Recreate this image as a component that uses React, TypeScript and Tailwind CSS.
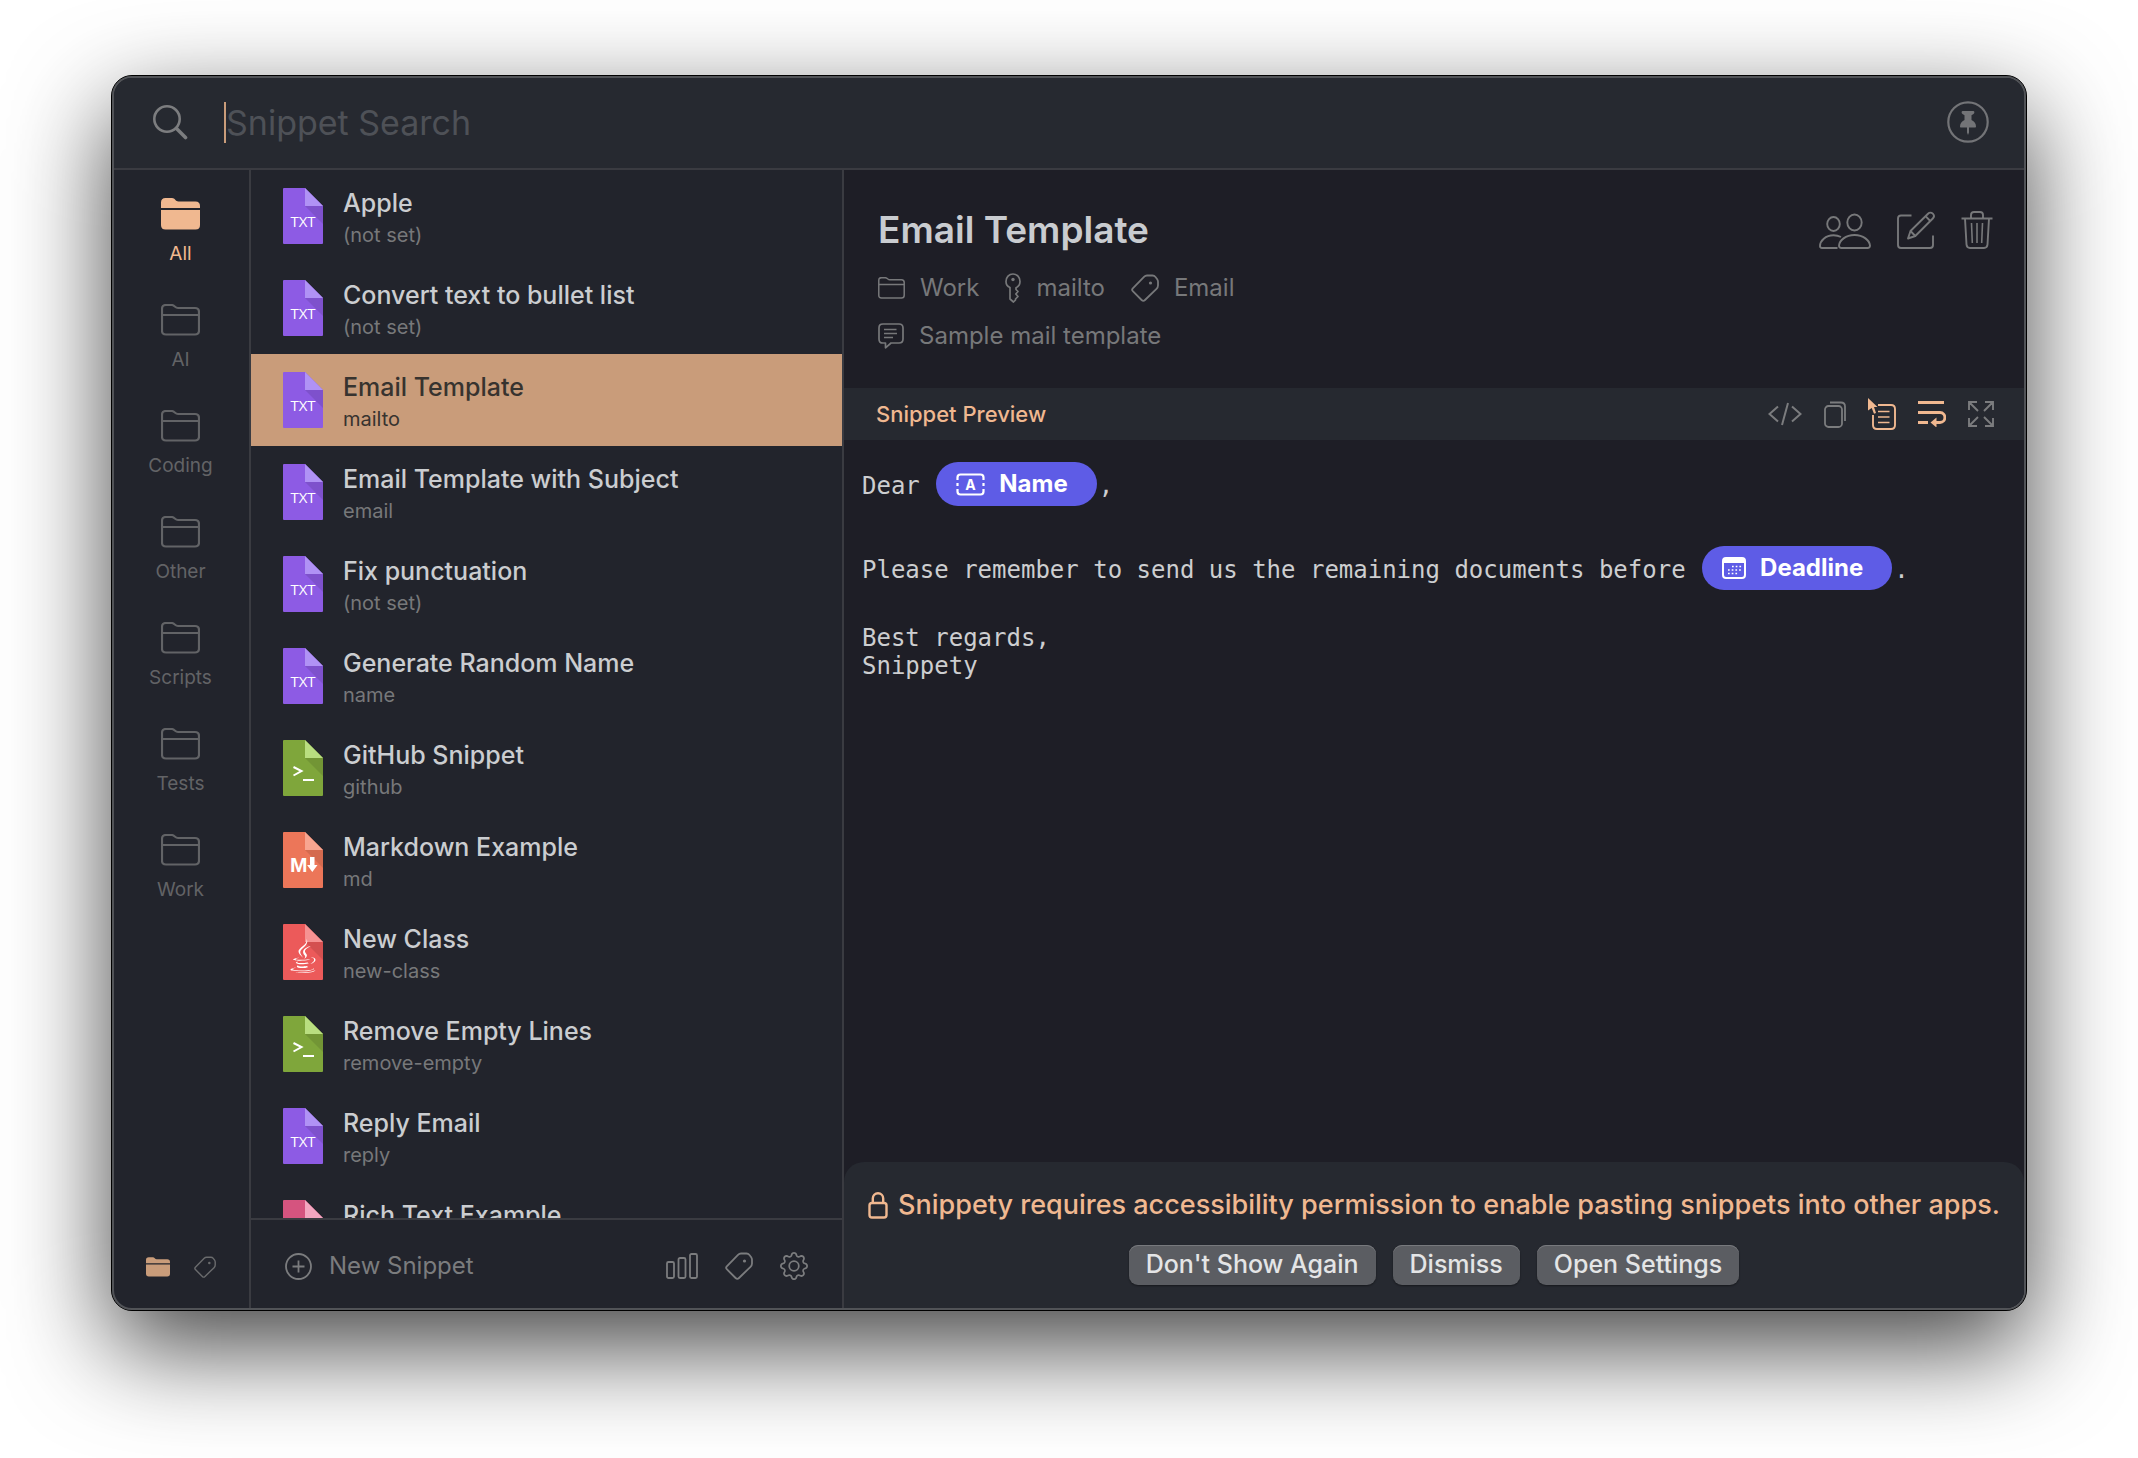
import type { ReactNode } from "react";
import clsx from "clsx";
import { BsGear } from "react-icons/bs";
import { FaJava } from "react-icons/fa";

type Kind = "txt" | "shell" | "md" | "java" | "rich";

const folders = ["All", "AI", "Coding", "Other", "Scripts", "Tests", "Work"];

const snippets: { title: string; keyword?: string; kind: Kind }[] = [
  { title: "Apple", keyword: "(not set)", kind: "txt" },
  { title: "Convert text to bullet list", keyword: "(not set)", kind: "txt" },
  { title: "Email Template", keyword: "mailto", kind: "txt" },
  { title: "Email Template with Subject", keyword: "email", kind: "txt" },
  { title: "Fix punctuation", keyword: "(not set)", kind: "txt" },
  { title: "Generate Random Name", keyword: "name", kind: "txt" },
  { title: "GitHub Snippet", keyword: "github", kind: "shell" },
  { title: "Markdown Example", keyword: "md", kind: "md" },
  { title: "New Class", keyword: "new-class", kind: "java" },
  { title: "Remove Empty Lines", keyword: "remove-empty", kind: "shell" },
  { title: "Reply Email", keyword: "reply", kind: "txt" },
  { title: "Rich Text Example", kind: "rich" },
];

const fileColors: Record<Kind, { body: string; fold: string }> = {
  txt: { body: "#8d5be4", fold: "#b092f5" },
  shell: { body: "#7fa63b", fold: "#b9de80" },
  md: { body: "#ec7659", fold: "#f8a590" },
  java: { body: "#ec5a5a", fold: "#f69292" },
  rich: { body: "#d5547f", fold: "#f3a6c0" },
};

/* ── ICONS ──────────────────────────────────────────────────── */

function FileIcon({ kind }: { kind: Kind }) {
  const { body, fold } = fileColors[kind];
  return (
    <svg viewBox="0 0 40 56" className="w-10 h-14 shrink-0" aria-hidden="true">
      <path d="M1 0H22L40 18V55a1 1 0 0 1-1 1H1a1 1 0 0 1-1-1V1a1 1 0 0 1 1-1Z" fill={body} />
      <path d="M22 18H40V36Z" fill="#000" opacity=".1" />
      <path d="M22 0L40 18H22Z" fill={fold} />
      {kind === "txt" && (
        <text x="20" y="39" textAnchor="middle" fill="#fff" fontFamily="Open Sans" fontSize="15" fontWeight="500">
          TXT
        </text>
      )}
      {kind === "shell" && (
        <path d="M10.500 27L18.500 31L10.500 35.500M20 40H31" fill="none" stroke="#fff" strokeWidth="2" />
      )}
      {kind === "md" && (
        <>
          <text x="7" y="40" fill="#fff" fontFamily="Liberation Sans" fontSize="21" fontWeight="700">
            M
          </text>
          <path d="M27 25h4.500v8h3l-5.200 7l-5.200-7h2.900Z" fill="#fff" />
        </>
      )}
      {kind === "java" && <FaJava x="3" y="15" size={34} color="#fff" />}
    </svg>
  );
}

function FolderIcon({ filled, className }: { filled?: boolean; className: string }) {
  if (filled) {
    return (
      <svg viewBox="0 0 39 32" className={className} fill="currentColor" aria-hidden="true">
        <path d="M0 10V4.500C0 1.500 1.500 0 4.500 0H11c3 0 3.500 3.500 6.500 3.500H34.500C37.500 3.500 39 5 39 8V10Z" />
        <path d="M0 12H39V27C39 30.200 37.500 31.500 34.500 31.500H4.500C1.500 31.500 0 30.200 0 27Z" />
      </svg>
    );
  }
  return (
    <svg viewBox="0 0 39 32" className={className} fill="none" stroke="currentColor" strokeWidth="2.200" aria-hidden="true">
      <path d="M1 5C1 2.200 2.200 1 5 1H10.500C13.500 1 14 4 17 4H34C36.800 4 38 5.200 38 8V26.500C38 29.300 36.800 30.500 34 30.500H5C2.200 30.500 1 29.300 1 26.500ZM1 11H38" />
    </svg>
  );
}

function TagIcon({ className }: { className: string }) {
  return (
    <svg viewBox="0 0 28 28" className={className} fill="none" stroke="currentColor" strokeWidth="1.800" strokeLinejoin="round" aria-hidden="true">
      <path d="M16 1.500H21.500C23 1.500 23.700 2 24.500 3L26.200 5.200C26.800 6 27 6.800 27 7.800V11.500C27 13 26.500 13.800 25.500 14.800L14 26C12.800 27.200 11.800 27.200 10.600 26L1.800 17.200C.800 16.200 .800 15.400 1.800 14.300L13 2.800C14 1.800 14.800 1.500 16 1.500Z" />
      <circle cx="19.500" cy="9" r="1.600" fill="currentColor" stroke="none" />
    </svg>
  );
}

function SearchIcon() {
  return (
    <svg viewBox="0 0 35 35" className="w-[35px] h-[35px] text-[#7c7d7f]" fill="none" stroke="currentColor" aria-hidden="true">
      <circle cx="14" cy="14" r="12.700" strokeWidth="2.600" />
      <path d="M23.500 23.500L32.500 32.500" strokeWidth="3.600" strokeLinecap="round" />
    </svg>
  );
}

function PinIcon() {
  return (
    <svg viewBox="0 0 42 42" className="size-[42px]" aria-hidden="true">
      <circle cx="21" cy="21" r="19.700" fill="none" stroke="currentColor" strokeWidth="2.200" />
      <path
        d="M15.500 10H26.500C27.700 10 27.700 12.500 26.500 13L24.500 14.200V19C27.500 20.500 29 22.500 29 25.500C29 26.200 28.600 26.500 28 26.500H22V31.500L21 34L20 31.500V26.500H14C13.400 26.500 13 26.200 13 25.500C13 22.500 14.500 20.500 17.500 19V14.200L15.500 13C14.300 12.500 14.300 10 15.500 10Z"
        fill="currentColor"
      />
    </svg>
  );
}

function PeopleIcon() {
  return (
    <svg viewBox="0 -1 52 36" className="w-[52px] h-9" fill="none" stroke="currentColor" strokeWidth="1.900" aria-hidden="true">
      <ellipse cx="14.500" cy="10" rx="6.300" ry="7" />
      <ellipse cx="35.500" cy="8.500" rx="7.200" ry="8" />
      <path d="M18.500 34H3C1.500 34 1 33.200 1 32C1 27 6.500 21.300 14.500 21.300C17.500 21.300 20 22 22 23" />
      <path d="M22.500 34C20.800 34 20 33.200 20 31.500C20.500 26.500 26.500 21 35.500 21C44.500 21 50.500 26.500 51 31.500C51 33.200 50.200 34 48.500 34Z" />
    </svg>
  );
}

function EditIcon() {
  return (
    <svg viewBox="0 0 38 38" className="size-[38px]" fill="none" stroke="currentColor" strokeWidth="1.900" strokeLinejoin="round" aria-hidden="true">
      <path d="M14.500 4.500H4C2 4.500 1 5.500 1 7.500V34C1 36 2 37 4 37H33C35 37 36 36 36 34V24.500" />
      <path d="M11 27.500L13.500 20L31 2.700C32.500 1.200 34.300 1.200 35.800 2.700C37.300 4.200 37.300 6 35.800 7.500L18.300 25Z" />
      <path d="M28.500 5.200L33.300 10M13.500 20L18.300 25" />
    </svg>
  );
}

function TrashIcon() {
  return (
    <svg viewBox="0 0 32 38" className="w-8 h-[38px]" fill="none" stroke="currentColor" strokeWidth="1.900" aria-hidden="true">
      <path d="M.500 7.500H31.500M10 7V4C10 2 11 1 13 1H19C21 1 22 2 22 4V7" />
      <path d="M4 7.500L5.500 33.500C5.700 35.800 6.700 37 9 37H23C25.300 37 26.300 35.800 26.500 33.500L28 7.500" />
      <path d="M10.500 12L11.300 32M16 12V32M21.500 12L20.700 32" strokeWidth="1.600" />
    </svg>
  );
}

function KeyIcon() {
  return (
    <svg viewBox="0 0 16 30" className="w-4 h-[30px]" fill="none" stroke="currentColor" strokeWidth="1.700" strokeLinejoin="round" aria-hidden="true">
      <path d="M5 14.500C2.500 13.500 1 11.300 1 8.500C1 4.200 4 1 8 1C12 1 15 4.200 15 8.500C15 11.500 13.300 13.700 11 14.700V16.500L13 18.500L10.800 21L13 23.500L10.500 26V27L8.500 29L5 26Z" />
      <circle cx="8" cy="6.500" r="1.700" fill="currentColor" stroke="none" />
    </svg>
  );
}

function CommentIcon() {
  return (
    <svg viewBox="0 0 26 26" className="size-[26px]" fill="none" stroke="currentColor" strokeWidth="1.700" strokeLinejoin="round" aria-hidden="true">
      <path d="M5 1H21C23.800 1 25 2.200 25 5V16C25 18.800 23.800 20 21 20H13L7.500 24.800V20H5C2.200 20 1 18.800 1 16V5C1 2.200 2.200 1 5 1Z" />
      <path d="M6 6.500H18.500M6 10.500H19M6 14.500H15" strokeWidth="1.500" />
    </svg>
  );
}

function CodeIcon() {
  return (
    <svg viewBox="0 0 34 24" className="w-[34px] h-6" fill="none" stroke="currentColor" strokeWidth="2" aria-hidden="true">
      <path d="M10 4.500L1.500 12L10 19.500M24 4.500L32.500 12L24 19.500M20 1L14 23" />
    </svg>
  );
}

function CopyIcon() {
  return (
    <svg viewBox="0 0 22 27" className="w-[22px] h-[27px]" fill="none" stroke="currentColor" strokeWidth="1.800" aria-hidden="true">
      <rect x="1" y="5" width="17" height="21" rx="3.500" />
      <path d="M6 1.500H17C19.800 1.500 21 2.700 21 5.500V20" />
    </svg>
  );
}

function PlaceholderIcon() {
  return (
    <svg viewBox="0 0 28 32" className="w-7 h-8" fill="none" stroke="currentColor" strokeWidth="1.900" aria-hidden="true">
      <path d="M10 7H23C25.800 7 27 8.200 27 11V27C27 29.800 25.800 31 23 31H9C6.200 31 5 29.800 5 27V17" />
      <path d="M10 13.500H21.500M10 19H21.500M10 24.500H21.500" strokeWidth="1.500" />
      <path d="M0 0L9.500 9H6L8 15L6 15.800L3.700 10L0 12.500Z" fill="currentColor" stroke="none" />
    </svg>
  );
}

function WrapIcon() {
  return (
    <svg viewBox="0 0 28 26" className="w-7 h-[26px]" fill="none" stroke="currentColor" strokeWidth="2.800" aria-hidden="true">
      <path d="M0 1.500H26M0 11.500H22C28.500 11.500 28.500 21.500 22 21.500H18M0 21.500H10" />
      <path d="M12.500 21.500L18.500 16.500V26.500Z" fill="currentColor" stroke="none" />
    </svg>
  );
}

function ExpandIcon() {
  return (
    <svg viewBox="0 0 26 26" className="size-[26px]" fill="none" stroke="currentColor" strokeWidth="1.900" aria-hidden="true">
      <path d="M1 9V1H9M1 1L10 10M17 1H25V9M25 1L16 10M25 17V25H17M25 25L16 16M9 25H1V17M1 25L10 16" />
    </svg>
  );
}

function TextFieldIcon() {
  return (
    <svg viewBox="0 0 29 23" className="w-[29px] h-[23px]" fill="none" stroke="currentColor" strokeWidth="2.200" aria-hidden="true">
      <path d="M1.500 7V4.500C1.500 2.500 2.500 1.500 4.500 1.500H24.500C26.500 1.500 27.500 2.500 27.500 4.500V7M1.500 16V18.500C1.500 20.500 2.500 21.500 4.500 21.500H24.500C26.500 21.500 27.500 20.500 27.500 18.500V16" />
      <path d="M1.500 10V13M27.500 10V13" />
      <text x="14.500" y="16.500" textAnchor="middle" fill="currentColor" stroke="none" fontFamily="Inter" fontSize="14" fontWeight="700">
        A
      </text>
    </svg>
  );
}

function CalendarIcon() {
  return (
    <svg viewBox="0 0 24 22" className="w-6 h-[22px]" aria-hidden="true">
      <rect x="1" y="1" width="22" height="20" rx="3" fill="none" stroke="currentColor" strokeWidth="2" />
      <path d="M1 2H23V6H1Z" fill="currentColor" />
      <path d="M10 9.500H20M6 13H20M6 16.500H16" stroke="currentColor" strokeWidth="1.700" strokeDasharray="1.700 2" />
    </svg>
  );
}

function LockIcon() {
  return (
    <svg viewBox="0 0 20 27" className="w-5 h-[27px]" fill="none" stroke="currentColor" strokeWidth="2.400" aria-hidden="true">
      <rect x="1.500" y="11" width="17" height="14.500" rx="2.500" />
      <path d="M4.800 11V6.500C4.800 3.500 7 1.300 10 1.300C13 1.300 15.200 3.500 15.200 6.500V11" />
    </svg>
  );
}

function StatsIcon() {
  return (
    <svg viewBox="0 0 32 26" className="w-8 h-[26px]" fill="none" stroke="currentColor" strokeWidth="1.800" aria-hidden="true">
      <rect x="1" y="9" width="7" height="16" rx="1.500" />
      <rect x="12.500" y="5" width="7" height="20" rx="1.500" />
      <rect x="24" y="1" width="7" height="24" rx="1.500" />
    </svg>
  );
}

/* ── PARTS ──────────────────────────────────────────────────── */

function IconButton({ label, children }: { label: string; children: ReactNode }) {
  return (
    <button type="button" aria-label={label} className="shrink-0">
      {children}
    </button>
  );
}

function Meta({ icon, children }: { icon: ReactNode; children: ReactNode }) {
  return (
    <span className="flex items-center gap-[15px]">
      {icon}
      {children}
    </span>
  );
}

function Pill({ icon, children }: { icon: ReactNode; children: ReactNode }) {
  return (
    <span className="mx-0.5 flex h-11 items-center gap-[14px] rounded-full bg-[#5e5ce6] pl-5 pr-[29px] font-['Inter',sans-serif] text-[24px] font-bold text-white">
      {icon}
      {children}
    </span>
  );
}

function NoticeButton({ children }: { children: ReactNode }) {
  return (
    <button
      type="button"
      className="h-10 rounded-[9px] bg-[#5b5d62] px-[17px] text-[25px] font-medium leading-[38px] text-[#e4e5e6] shadow-[inset_0_1px_0_#77797d,0_1px_2px_rgba(0,0,0,0.4)]"
    >
      <span className="block h-10">{children}</span>
    </button>
  );
}

export default function App() {
  return (
    <div className="flex min-h-screen bg-white px-[111px] pt-[75px] pb-[147px] font-['Inter',sans-serif]">
      <div className="flex w-full flex-col rounded-[21px] border border-black bg-[#22242c] shadow-[0_36px_100px_rgba(0,0,0,0.74)]">
        <div className="flex grow flex-col overflow-hidden rounded-[20px] border-2 border-[#515357]">
          {/* Search bar */}
          <header className="flex h-[92px] items-center border-b-2 border-[#3a3b41] bg-[#262930] pl-[39px] pr-[35px] pb-0.5">
            <SearchIcon />
            <span className="ml-9 h-[41px] w-0.5 bg-[#c99c7a]" />
            <input
              type="text"
              aria-label="Snippet Search"
              placeholder="Snippet Search"
              className="min-w-0 grow bg-transparent text-[34px] text-[#c9cbce] outline-none placeholder:text-[#4e5157]"
            />
            <span className="flex text-[#737477]">
              <IconButton label="Pin window">
                <PinIcon />
              </IconButton>
            </span>
          </header>

          <div className="flex grow">
            {/* Folders */}
            <nav className="flex w-[137px] shrink-0 flex-col border-r-2 border-[#3a3b41]">
              {folders.map((name, i) => (
                <button
                  key={name}
                  type="button"
                  className={clsx(
                    "flex h-[106px] flex-col items-center gap-3 pt-7 pr-0.5 text-[19px] leading-6",
                    i === 0 ? "text-[#f0b890]" : "text-[#626366]",
                  )}
                >
                  <FolderIcon filled={i === 0} className="w-[39px] h-8" />
                  {name}
                </button>
              ))}
              <div className="mt-auto flex h-[82px] items-center gap-6 pl-8">
                <button type="button" aria-label="Folders" className="text-[#c99c7a]">
                  <FolderIcon filled className="w-6 h-5" />
                </button>
                <button type="button" aria-label="Tags" className="text-[#6a6b6d]">
                  <TagIcon className="size-[22px]" />
                </button>
              </div>
            </nav>

            {/* Snippets */}
            <section className="flex w-[593px] shrink-0 flex-col border-r-2 border-[#3a3b41]">
              <ul className="h-0 grow overflow-hidden">
                {snippets.map(({ title, keyword, kind }) => {
                  const selected = title === "Email Template";
                  return (
                    <li key={title}>
                      <button
                        type="button"
                        className={clsx(
                          "flex h-[92px] w-full items-center gap-5 px-8 text-left",
                          selected ? "bg-[#c99c7a]" : "bg-transparent",
                        )}
                      >
                        <FileIcon kind={kind} />
                        <span className="flex h-[70px] flex-col pt-1.5">
                          <span className={clsx("text-[25px] font-medium leading-8", selected ? "text-[#37332f]" : "text-[#cbcdd0]")}>
                            {title}
                          </span>
                          {keyword && (
                            <span className={clsx("text-[20px] leading-8", selected ? "text-[#37332f]" : "text-[#77787a]")}>
                              {keyword}
                            </span>
                          )}
                        </span>
                      </button>
                    </li>
                  );
                })}
              </ul>
              <footer className="flex h-[90px] items-center border-t-2 border-[#3a3b41] px-[34px] pt-1 text-[#7b7c7e]">
                <button type="button" className="mr-auto flex items-center gap-[17px] text-[24px]">
                  <svg viewBox="0 0 27 27" className="size-[27px]" fill="none" stroke="currentColor" strokeWidth="1.800" aria-hidden="true">
                    <circle cx="13.500" cy="13.500" r="12.500" />
                    <path d="M13.500 7.500V19.500M7.500 13.500H19.500" />
                  </svg>
                  New Snippet
                </button>
                <div className="flex items-center gap-[27px]">
                  <IconButton label="Statistics">
                    <StatsIcon />
                  </IconButton>
                  <IconButton label="Tags">
                    <TagIcon className="size-7" />
                  </IconButton>
                  <IconButton label="Settings">
                    <BsGear className="size-7" />
                  </IconButton>
                </div>
              </footer>
            </section>

            {/* Detail */}
            <main className="flex min-w-0 grow flex-col bg-[#1e1e26]">
              <div className="flex h-[218px] items-start justify-between pl-[34px] pr-[31px] text-[#77787a]">
                <div className="pt-8">
                  <h1 className="mb-1.5 text-[37px] font-semibold leading-[56px] text-[#c9ccd0]">Email Template</h1>
                  <div className="flex h-12 items-center gap-[26px] text-[24px]">
                    <Meta icon={<FolderIcon className="w-[27px] h-[22px]" />}>Work</Meta>
                    <Meta icon={<KeyIcon />}>mailto</Meta>
                    <Meta icon={<TagIcon className="size-7" />}>Email</Meta>
                  </div>
                  <div className="flex h-12 items-center text-[24px]">
                    <Meta icon={<CommentIcon />}>Sample mail template</Meta>
                  </div>
                </div>
                <div className="flex items-end gap-[26px] pt-[41px]">
                  <IconButton label="Share">
                    <PeopleIcon />
                  </IconButton>
                  <IconButton label="Edit">
                    <EditIcon />
                  </IconButton>
                  <IconButton label="Delete">
                    <TrashIcon />
                  </IconButton>
                </div>
              </div>

              <div className="flex h-[52px] items-center justify-between bg-[#262930] pl-8 pr-[30px]">
                <h2 className="text-[22px] font-medium text-[#f0b890]">Snippet Preview</h2>
                <div className="flex items-center gap-[22px] text-[#7b7c7e]">
                  <IconButton label="Show code">
                    <CodeIcon />
                  </IconButton>
                  <IconButton label="Copy">
                    <CopyIcon />
                  </IconButton>
                  <span className="flex items-center gap-[22px] text-[#f0b890]">
                    <IconButton label="Show placeholders">
                      <PlaceholderIcon />
                    </IconButton>
                    <IconButton label="Wrap lines">
                      <WrapIcon />
                    </IconButton>
                  </span>
                  <IconButton label="Full screen">
                    <ExpandIcon />
                  </IconButton>
                </div>
              </div>

              <div className="grow px-[18px] pt-4 font-['DejaVu_Sans_Mono',monospace] text-[24px] leading-7 text-[#cdced0]">
                <div className="flex h-14 items-center whitespace-pre">
                  <span className="pt-1">{"Dear "}</span>
                  <Pill icon={<TextFieldIcon />}>Name</Pill>
                  <span className="pt-1">,</span>
                </div>
                <div className="h-7" />
                <div className="flex h-14 items-center whitespace-pre">
                  <span className="pt-1">{"Please remember to send us the remaining documents before "}</span>
                  <Pill icon={<CalendarIcon />}>Deadline</Pill>
                  <span className="pt-1">.</span>
                </div>
                <div className="h-7" />
                <p>Best regards,</p>
                <p>Snippety</p>
              </div>

              {/* Permission notice */}
              <div className="flex h-[146px] flex-col items-center rounded-t-[20px] bg-[#262930] pt-[23px]">
                <p className="flex items-center gap-[10px] whitespace-nowrap text-[27px] font-medium leading-10 text-[#f0b890]">
                  <LockIcon />
                  Snippety requires accessibility permission to enable pasting snippets into other apps.
                </p>
                <div className="mt-5 flex gap-[17px]">
                  <NoticeButton>Don't Show Again</NoticeButton>
                  <NoticeButton>Dismiss</NoticeButton>
                  <NoticeButton>Open Settings</NoticeButton>
                </div>
              </div>
            </main>
          </div>
        </div>
      </div>
    </div>
  );
}
